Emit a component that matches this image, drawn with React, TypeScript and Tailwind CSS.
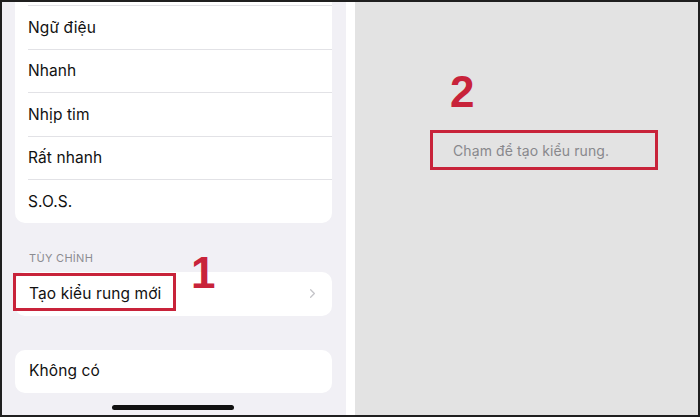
import { ChevronRight } from 'lucide-react'

const patterns = ['Ngữ điệu', 'Nhanh', 'Nhịp tim', 'Rất nhanh', 'S.O.S.']

const font = { fontFamily: 'Inter, "Noto Sans", "Liberation Sans", sans-serif' }

export default function App() {
  return (
    <div className="w-[700px] h-[417px] bg-[#1f1f1f] p-[2px] flex" style={font}>
      {/* danh sách kiểu rung */}
      <div className="w-[344px] h-full bg-[#f1f0f5] flex flex-col pl-[13px] pr-[14px]">
        <div className="bg-white rounded-b-[10px] pt-[3px]">
          {patterns.map((p) => (
            <div key={p} className="ml-[13px] h-[43.5px] border-t border-[#e2e2e6] flex items-center text-[15.5px] text-[#111] tracking-[0.1px]">
              {p}
            </div>
          ))}
        </div>

        <div className="h-[49px] flex items-end pb-[7px] pl-[14px] text-[11px] leading-[13px] text-[#8c8c91] tracking-[0.3px]">
          TÙY CHỈNH
        </div>

        <div className="relative bg-white rounded-[10px] h-[44px] flex items-center justify-between pl-[14px] pr-[12px]">
          <span className="text-[15.5px] text-[#111] tracking-[0.1px]">Tạo kiểu rung mới</span>
          <ChevronRight className="w-[15px] h-[15px] text-[#c4c4c8]" strokeWidth={2} />
          <div className="absolute left-[-2px] top-[1px] w-[163px] h-[38px] border-[3px] border-[#c8233a]" />
          <span className="absolute left-[176px] top-[-21px] text-[44px] leading-[44px] font-bold text-[#c8233a]" style={{ fontFamily: '"Liberation Sans", Arial, sans-serif' }}>
            1
          </span>
        </div>

        <div className="mt-[34px] bg-white rounded-[10px] h-[43px] flex items-center pl-[14px] text-[15.5px] text-[#111] tracking-[0.1px]">
          Không có
        </div>

        <div className="flex-1 flex items-end pb-[5px]">
          <div className="ml-[97px] w-[122px] h-[5px] rounded-full bg-[#111]" />
        </div>
      </div>

      <div className="w-[9px] h-full bg-white" />

      {/* màn hình tạo kiểu rung */}
      <div className="flex-1 h-full bg-[#e3e3e3] flex flex-col pl-[75px] pt-[68px]">
        <div className="pl-[20px] text-[44px] leading-[44px] font-bold text-[#c8233a]" style={{ fontFamily: '"Liberation Sans", Arial, sans-serif' }}>
          2
        </div>
        <div className="mt-[16px] w-[228px] h-[40px] border-[3px] border-[#c8233a] flex items-center pl-[20px] text-[14px] text-[#88888c] tracking-[0.1px]">
          Chạm để tạo kiểu rung.
        </div>
      </div>
    </div>
  )
}
